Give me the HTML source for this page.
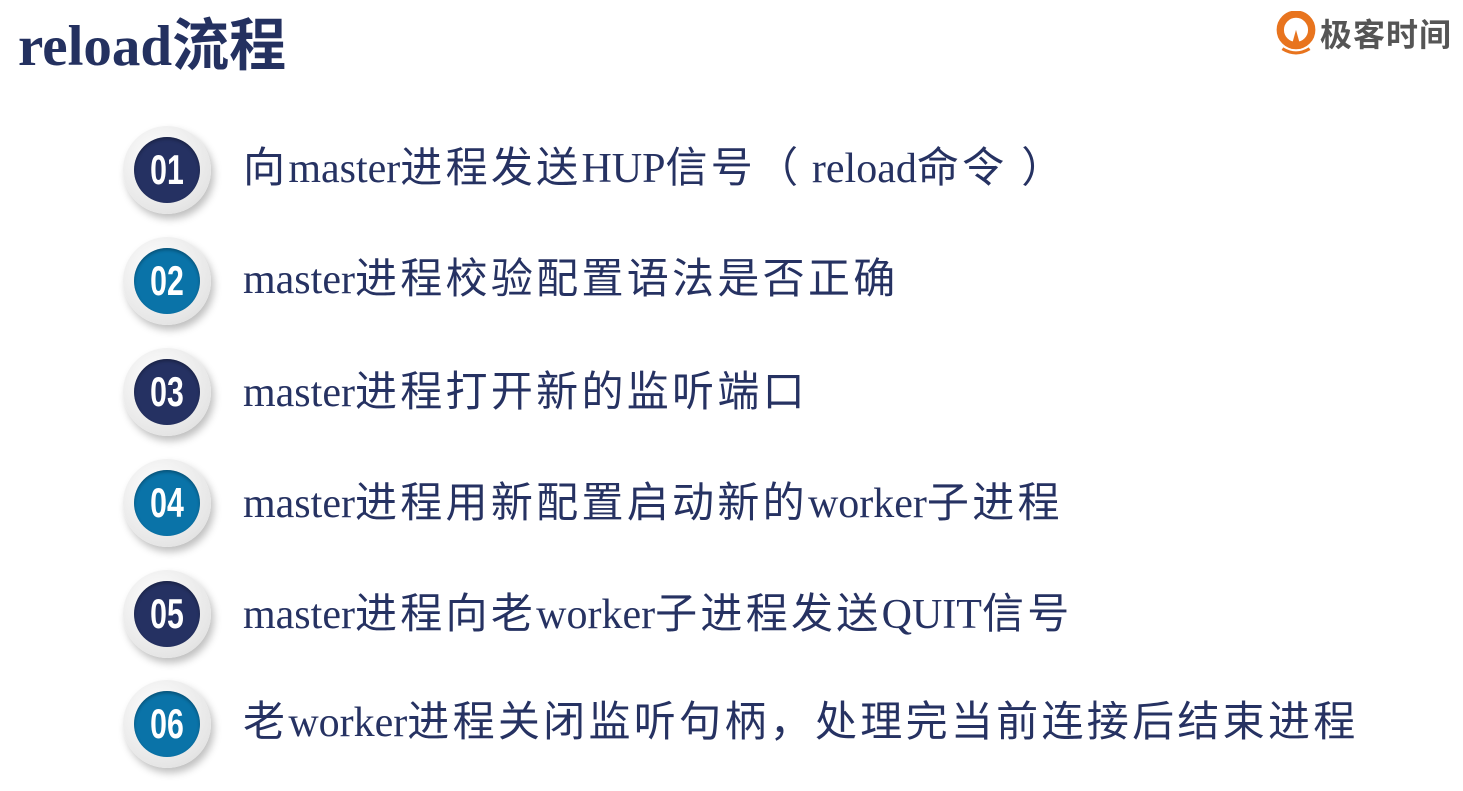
<!DOCTYPE html>
<html><head><meta charset="utf-8"><style>
body{margin:0;width:1463px;height:791px;background:#fff;position:relative;overflow:hidden;font-family:"Liberation Serif","Noto Sans CJK SC",serif;color:#263262}
.t{position:absolute;left:18px;top:11px;font-size:57px;font-weight:bold;color:#243160;line-height:72px;white-space:nowrap}
.logo{position:absolute;left:1276px;top:10px;height:46px;display:flex;align-items:center}
.logo span{font-family:"Liberation Sans","Noto Sans CJK SC",sans-serif;font-size:32px;font-weight:bold;color:#555;margin-left:4px;letter-spacing:1px}
.c{position:absolute;left:123px;width:88px;height:88px;border-radius:50%;background:radial-gradient(circle at 40% 35%,#fff,#e6e6e6 70%,#d6d6d6);box-shadow:3px 5px 8px rgba(0,0,0,.25)}
.c div{position:absolute;left:11px;top:11px;width:66px;height:66px;border-radius:50%;box-shadow:inset 0 2px 3px rgba(0,0,0,.3)}
.c b{position:absolute;left:0;top:0;width:66px;height:66px;color:#fff;font-family:"Liberation Sans",sans-serif;font-weight:bold;font-size:42px;line-height:66px;text-align:center;transform:scaleX(.72)}
.d{background:#253162}.b{background:#0a73a8}
.x{position:absolute;left:243px;font-size:42px;line-height:50px;white-space:nowrap;letter-spacing:3.3px}
.x i{font-style:normal;letter-spacing:0}
</style></head><body>
<div class="t">reload流程</div>
<div class="logo"><svg width="40" height="44" viewBox="0 0 38 42"><circle cx="19" cy="18" r="15" fill="none" stroke="#e8741e" stroke-width="7"/><path d="M19 18 L14 36 L24 36 Z" fill="#e8741e"/><path d="M6 36 Q19 44 32 36" stroke="#e8741e" stroke-width="3" fill="none"/></svg><span>极客时间</span></div>
<div class="c" style="top:126px"><div class="d"><b>01</b></div></div>
<div class="c" style="top:237px"><div class="b"><b>02</b></div></div>
<div class="c" style="top:348px"><div class="d"><b>03</b></div></div>
<div class="c" style="top:459px"><div class="b"><b>04</b></div></div>
<div class="c" style="top:570px"><div class="d"><b>05</b></div></div>
<div class="c" style="top:680px"><div class="b"><b>06</b></div></div>
<div class="x" style="top:144px">向<i>master</i>进程发送<i>HUP</i>信号（<i> reload</i>命令 ）</div>
<div class="x" style="top:255px"><i>master</i>进程校验配置语法是否正确</div>
<div class="x" style="top:368px"><i>master</i>进程打开新的监听端口</div>
<div class="x" style="top:479px"><i>master</i>进程用新配置启动新的<i>worker</i>子进程</div>
<div class="x" style="top:590px"><i>master</i>进程向老<i>worker</i>子进程发送<i>QUIT</i>信号</div>
<div class="x" style="top:698px">老<i>worker</i>进程关闭监听句柄，处理完当前连接后结束进程</div>
</body></html>
